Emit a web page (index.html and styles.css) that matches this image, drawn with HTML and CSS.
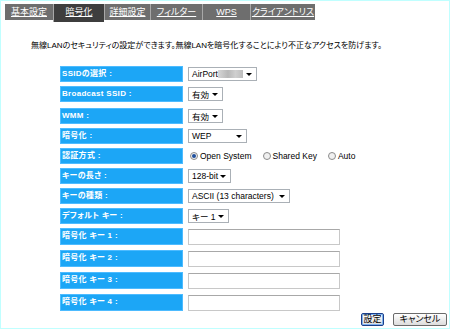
FILE: index.html
```html
<!DOCTYPE html>
<html lang="ja">
<head>
    <meta charset="UTF-8">
    <meta name="viewport" content="width=device-width, initial-scale=1.0">
    <title>暗号化</title>
    <link rel="stylesheet" href="styles.css">
</head>
<body>
<div class="frame">
    <div class="tabs">
        <a class="tab t1" href="#">基本設定</a>
        <a class="tab t2 current" href="#">暗号化</a>
        <a class="tab t3" href="#">詳細設定</a>
        <a class="tab t4" href="#">フィルター</a>
        <a class="tab t5" href="#">WPS</a>
        <a class="tab t6" href="#">クライアントリスト</a>
    </div>

    <p class="intro">無線LANのセキュリティの設定ができます。無線LANを暗号化することにより不正なアクセスを防げます。</p>

    <div class="form">
        <div class="row">
            <div class="label">SSIDの選択 :</div>
            <div class="field"><span class="select w-ssid">AirPort<span class="masked"></span><span class="arrow"></span></span></div>
        </div>
        <div class="row">
            <div class="label">Broadcast SSID :</div>
            <div class="field"><span class="select w-on">有効<span class="arrow"></span></span></div>
        </div>
        <div class="row gap">
            <div class="label">WMM :</div>
            <div class="field"><span class="select w-on">有効<span class="arrow"></span></span></div>
        </div>
        <div class="row">
            <div class="label">暗号化 :</div>
            <div class="field"><span class="select w-enc">WEP<span class="arrow"></span></span></div>
        </div>
        <div class="row">
            <div class="label">認証方式 :</div>
            <div class="field radios">
                <label class="radio"><span class="dot checked"></span>Open System</label>
                <label class="radio"><span class="dot"></span>Shared Key</label>
                <label class="radio"><span class="dot"></span>Auto</label>
            </div>
        </div>
        <div class="row">
            <div class="label">キーの長さ :</div>
            <div class="field"><span class="select w-len">128-bit<span class="arrow"></span></span></div>
        </div>
        <div class="row">
            <div class="label">キーの種類 :</div>
            <div class="field"><span class="select w-type">ASCII (13 characters)<span class="arrow"></span></span></div>
        </div>
        <div class="row">
            <div class="label">デフォルト キー :</div>
            <div class="field"><span class="select w-key">キー 1<span class="arrow"></span></span></div>
        </div>
        <div class="row tall first">
            <div class="label">暗号化 キー 1 :</div>
            <div class="field"><input class="text" type="text"></div>
        </div>
        <div class="row tall">
            <div class="label">暗号化 キー 2 :</div>
            <div class="field"><input class="text" type="text"></div>
        </div>
        <div class="row tall">
            <div class="label">暗号化 キー 3 :</div>
            <div class="field"><input class="text" type="text"></div>
        </div>
        <div class="row tall">
            <div class="label">暗号化 キー 4 :</div>
            <div class="field"><input class="text" type="text"></div>
        </div>
    </div>

    <div class="actions">
        <button class="btn ok">設定</button>
        <button class="btn cancel">キャンセル</button>
    </div>
</div>
</body>
</html>
```

FILE: styles.css
```css
* {
    margin: 0;
    padding: 0;
    box-sizing: border-box;
}
body {
    font-family: 'Liberation Sans', 'Noto Sans CJK JP', sans-serif;
    font-feature-settings: "palt";
    background: #ffffff;
    color: #000;
}
.frame {
    width: 450px;
    height: 329px;
    border: 1px solid #c0ffff;
    padding-top: 3px;
}
.tabs {
    display: flex;
    align-items: flex-start;
    margin-left: 4px;
}
.tab {
    height: 16px;
    line-height: 16px;
    background: #6e6e6e;
    color: #ffffff;
    font-size: 9px;
    text-align: center;
    text-decoration: underline;
    border-left: 1px solid #a8a8a8;
    flex: none;
}
.tab.t1 { width: 48px; border-left: none; }
.tab.t2 { width: 51px; }
.tab.t3 { width: 46px; }
.tab.t4 { width: 52px; }
.tab.t5 { width: 48px; }
.tab.t6 { width: 65px; }
.tab.current {
    height: 18px;
    background: #3e3e3e;
}
.intro {
    margin: 18px 0 0 30px;
    font-size: 8px;
    line-height: 12px;
    color: #000;
}
.form {
    margin: 14px 0 0 59px;
    display: flex;
    flex-direction: column;
    gap: 4px;
}
.row {
    display: flex;
    align-items: center;
    height: 16px;
}
.row.gap {
    margin-top: 2px;
}
.row.tall {
    height: 17px;
    margin-top: 1px;
}
.row.tall.first {
    margin-top: 0;
}
.label {
    width: 123px;
    height: 100%;
    background: #1ca6f6;
    border: 1px solid #4dbbff;
    color: #ffffff;
    font-size: 8px;
    font-weight: bold;
    letter-spacing: 0.3px;
    line-height: 14px;
    padding-left: 1px;
    white-space: nowrap;
}
.field {
    margin-left: 5px;
    display: flex;
    align-items: center;
}
.select {
    display: inline-flex;
    align-items: center;
    height: 14px;
    border: 1px solid #aab0b6;
    background: #ffffff;
    font-size: 8.5px;
    padding-left: 3px;
    white-space: nowrap;
}
.arrow {
    margin-left: auto;
    margin-right: 4px;
    width: 0;
    height: 0;
    border-left: 3px solid transparent;
    border-right: 3px solid transparent;
    border-top: 3px solid #000;
}
.masked {
    width: 25px;
    height: 8px;
    background: linear-gradient(to right, #d6d6d6, #b8b8b8 40%, #cfcfcf 70%, #bdbdbd);
}
.w-ssid { width: 69px; }
.w-on { width: 35px; }
.w-enc { width: 59px; }
.w-len { width: 43px; }
.w-type { width: 102px; }
.w-key { width: 41px; }
.radios {
    margin-left: 7px;
    gap: 11px;
    font-size: 8.5px;
}
.radio {
    display: flex;
    align-items: center;
    gap: 2px;
}
.dot {
    width: 8px;
    height: 8px;
    border-radius: 50%;
    border: 1px solid #8c8c8c;
    background: #f0f0f0;
    display: flex;
    align-items: center;
    justify-content: center;
}
.dot.checked::after {
    content: "";
    width: 4px;
    height: 4px;
    border-radius: 50%;
    background: #1e4f9c;
}
.text {
    width: 152px;
    height: 16px;
    border: 1px solid #c8c8c8;
    border-top-color: #a8a8a8;
    background: #ffffff;
    outline: none;
}
.actions {
    display: flex;
    justify-content: flex-end;
    gap: 9px;
    margin: 2px 2px 0 0;
}
.btn {
    height: 13px;
    font-family: 'Liberation Sans', 'Noto Sans CJK JP', sans-serif;
    font-feature-settings: "palt";
    font-size: 9px;
    line-height: 11px;
    color: #000;
    background: linear-gradient(to bottom, #ffffff, #dcdcdc);
    border: 1px solid #6a6a6a;
    border-radius: 2px;
}
.btn.ok {
    width: 23px;
    border-color: #1b3f8a;
    box-shadow: inset 0 0 0 1px #7fb2f0;
}
.btn.cancel {
    width: 54px;
}
```
